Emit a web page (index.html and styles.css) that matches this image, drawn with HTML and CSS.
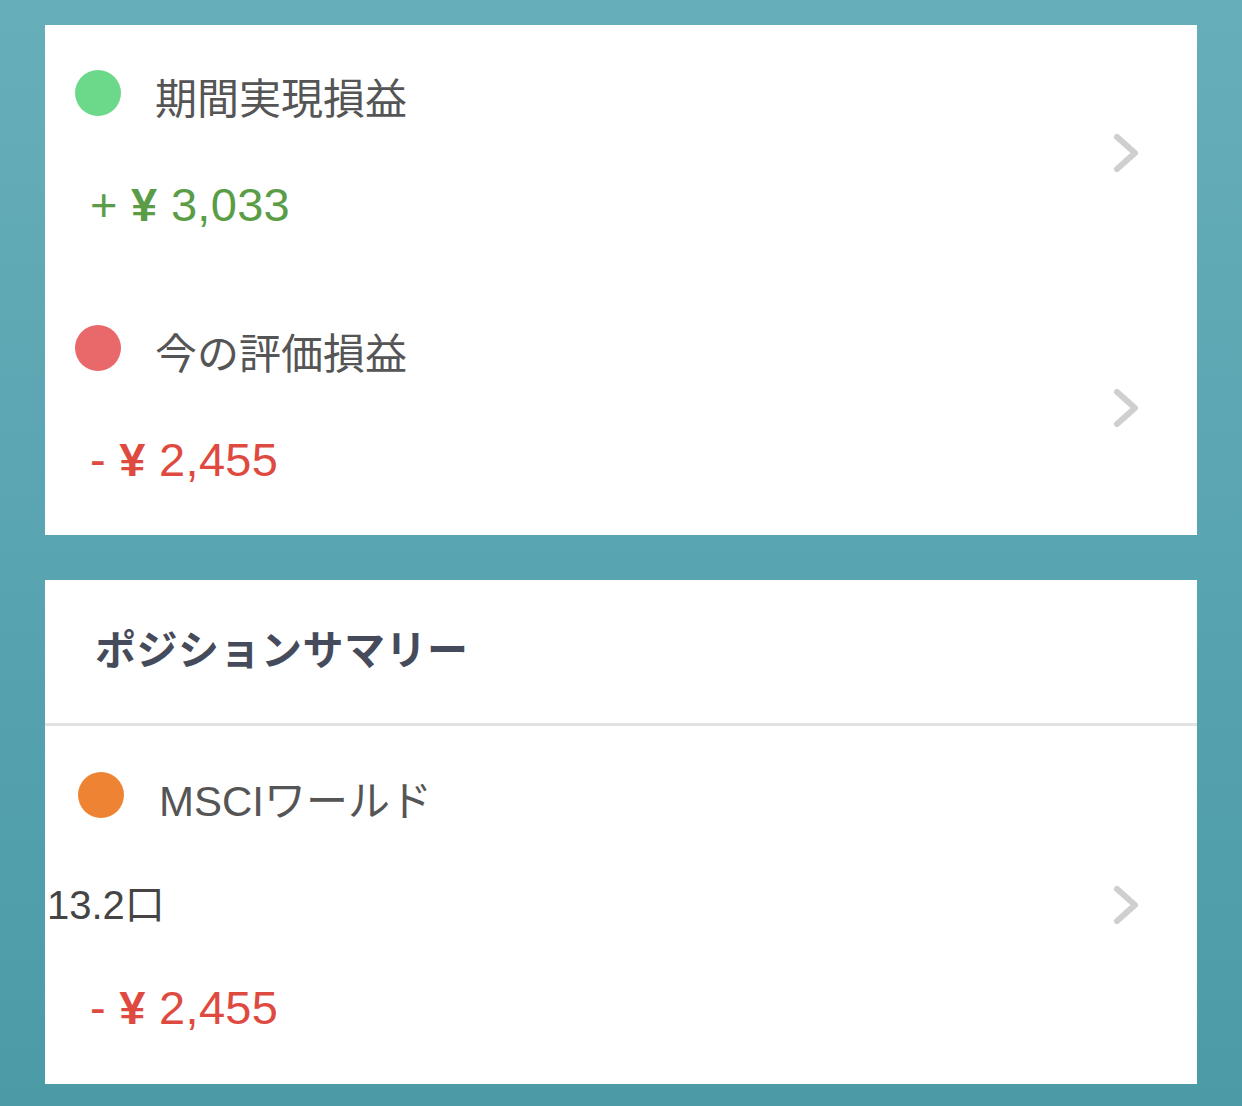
FILE: index.html
```html
<!DOCTYPE html>
<html lang="ja">
<head>
<meta charset="utf-8">
<link rel="stylesheet" href="styles.css">
</head>
<body>
<div class="page">
  <section class="card">
    <div class="row row-pl">
      <div class="row-body">
        <div class="title"><span class="dot dot-green"></span><span class="label">期間実現損益</span></div>
        <div class="amount amount-plus">+ <span class="yen">¥</span> 3,033</div>
      </div>
      <svg class="chev" width="30" height="42" viewBox="0 0 30 42"><path d="M5 5 L23 21 L5 37" fill="none" stroke="#cfcfcf" stroke-width="6" stroke-linecap="round" stroke-linejoin="round"/></svg>
    </div>
    <div class="row row-pl">
      <div class="row-body">
        <div class="title"><span class="dot dot-red"></span><span class="label">今の評価損益</span></div>
        <div class="amount amount-minus">- <span class="yen">¥</span> 2,455</div>
      </div>
      <svg class="chev" width="30" height="42" viewBox="0 0 30 42"><path d="M5 5 L23 21 L5 37" fill="none" stroke="#cfcfcf" stroke-width="6" stroke-linecap="round" stroke-linejoin="round"/></svg>
    </div>
  </section>

  <section class="card">
    <h2 class="card-head">ポジションサマリー</h2>
    <div class="row row-pos">
      <div class="row-body">
        <div class="title title-pos"><span class="dot dot-orange"></span><span class="label">MSCIワールド</span></div>
        <div class="qty">13.2口</div>
        <div class="amount amount-minus">- <span class="yen">¥</span> 2,455</div>
      </div>
      <svg class="chev" width="30" height="42" viewBox="0 0 30 42"><path d="M5 5 L23 21 L5 37" fill="none" stroke="#cfcfcf" stroke-width="6" stroke-linecap="round" stroke-linejoin="round"/></svg>
    </div>
  </section>
</div>
</body>
</html>
```

FILE: styles.css
```css
html, body {
  margin: 0;
  padding: 0;
}
body {
  background: linear-gradient(180deg, #66aeba 0%, #4b9ba7 100%);
  min-height: 1106px;
  font-family: "Liberation Sans", "Noto Sans CJK JP", sans-serif;
}
.page {
  display: flex;
  flex-direction: column;
  gap: 45px;
  padding: 25px 45px 22px 45px;
}
.card {
  background: #ffffff;
  display: flex;
  flex-direction: column;
}
.row {
  display: flex;
  align-items: center;
  justify-content: space-between;
  padding-right: 55px;
}
.row-pl {
  height: 255px;
  box-sizing: border-box;
  padding-top: 45px;
  padding-bottom: 45px;
}
.row-body {
  display: flex;
  flex-direction: column;
  gap: 45px;
  align-self: flex-start;
}
.title {
  display: flex;
  align-items: flex-start;
  height: 60px;
  padding-left: 30px;
}
.dot {
  width: 46px;
  height: 46px;
  border-radius: 50%;
  flex: none;
}
.dot-green { background: #6cd889; }
.dot-red { background: #e9686a; }
.dot-orange { background: #ee8433; }
.label {
  margin-left: 34px;
  font-size: 42px;
  line-height: 60px;
  color: #555555;
  white-space: nowrap;
}
.amount {
  padding-left: 45px;
  font-size: 47px;
  line-height: 60px;
  white-space: pre;
  letter-spacing: 0.3px;
}
.yen {
  font-weight: 700;
}
.amount-plus { color: #5a9d46; }
.amount-minus { color: #df4a40; }
.chev {
  display: block;
  flex: none;
}
.card-head {
  margin: 0;
  padding: 41px 0 42px 50px;
  font-size: 41px;
  line-height: 60px;
  font-weight: 700;
  color: #464b5b;
  border-bottom: 3px solid #e2e2e2;
  letter-spacing: 0.5px;
}
.row-pos {
  height: 358px;
  box-sizing: border-box;
  padding-top: 46px;
  padding-bottom: 46px;
  padding-left: 2px;
}
.row-pos .row-body {
  gap: 43px;
}
.title-pos {
  padding-left: 31px;
}
.title-pos .label {
  margin-left: 35px;
}
.qty {
  font-size: 40px;
  line-height: 60px;
  color: #444444;
  white-space: nowrap;
}
.row-pos .amount {
  padding-left: 43px;
}
```
